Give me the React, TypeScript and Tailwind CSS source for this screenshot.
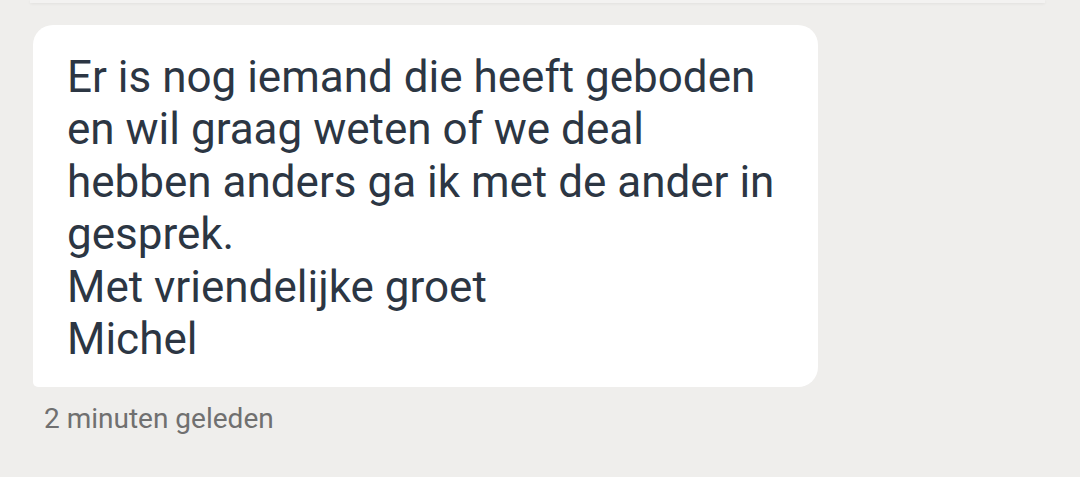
import React from 'react';

const message =
  'Er is nog iemand die heeft geboden\nen wil graag weten of we deal\nhebben anders ga ik met de ander in\ngesprek.\nMet vriendelijke groet\nMichel';

export default function App() {
  return (
    <div
      className="w-[1080px] h-[477px] bg-[#efeeec] overflow-hidden"
      style={{ fontFamily: 'Roboto, "Noto Sans", sans-serif' }}
    >
      {/* edge of the previous card */}
      <div className="ml-[30px] mr-[35px] h-[3px] bg-[#f3f2f1] shadow-[0_1px_3px_rgba(0,0,0,0.06)]" />

      <div className="pt-[22px] pl-[33px]">
        <div className="w-[785px] bg-white rounded-[20px] rounded-bl-[5px] pl-[34px] pr-[20px] pt-[26px] pb-[22px]">
          <p className="text-[44px] leading-[52.4px] text-[#2c3643] whitespace-pre-line">{message}</p>
        </div>
        <div className="mt-[14px] pl-[11px] text-[28px] leading-[36px] text-[#707070]">2 minuten geleden</div>
      </div>
    </div>
  );
}
